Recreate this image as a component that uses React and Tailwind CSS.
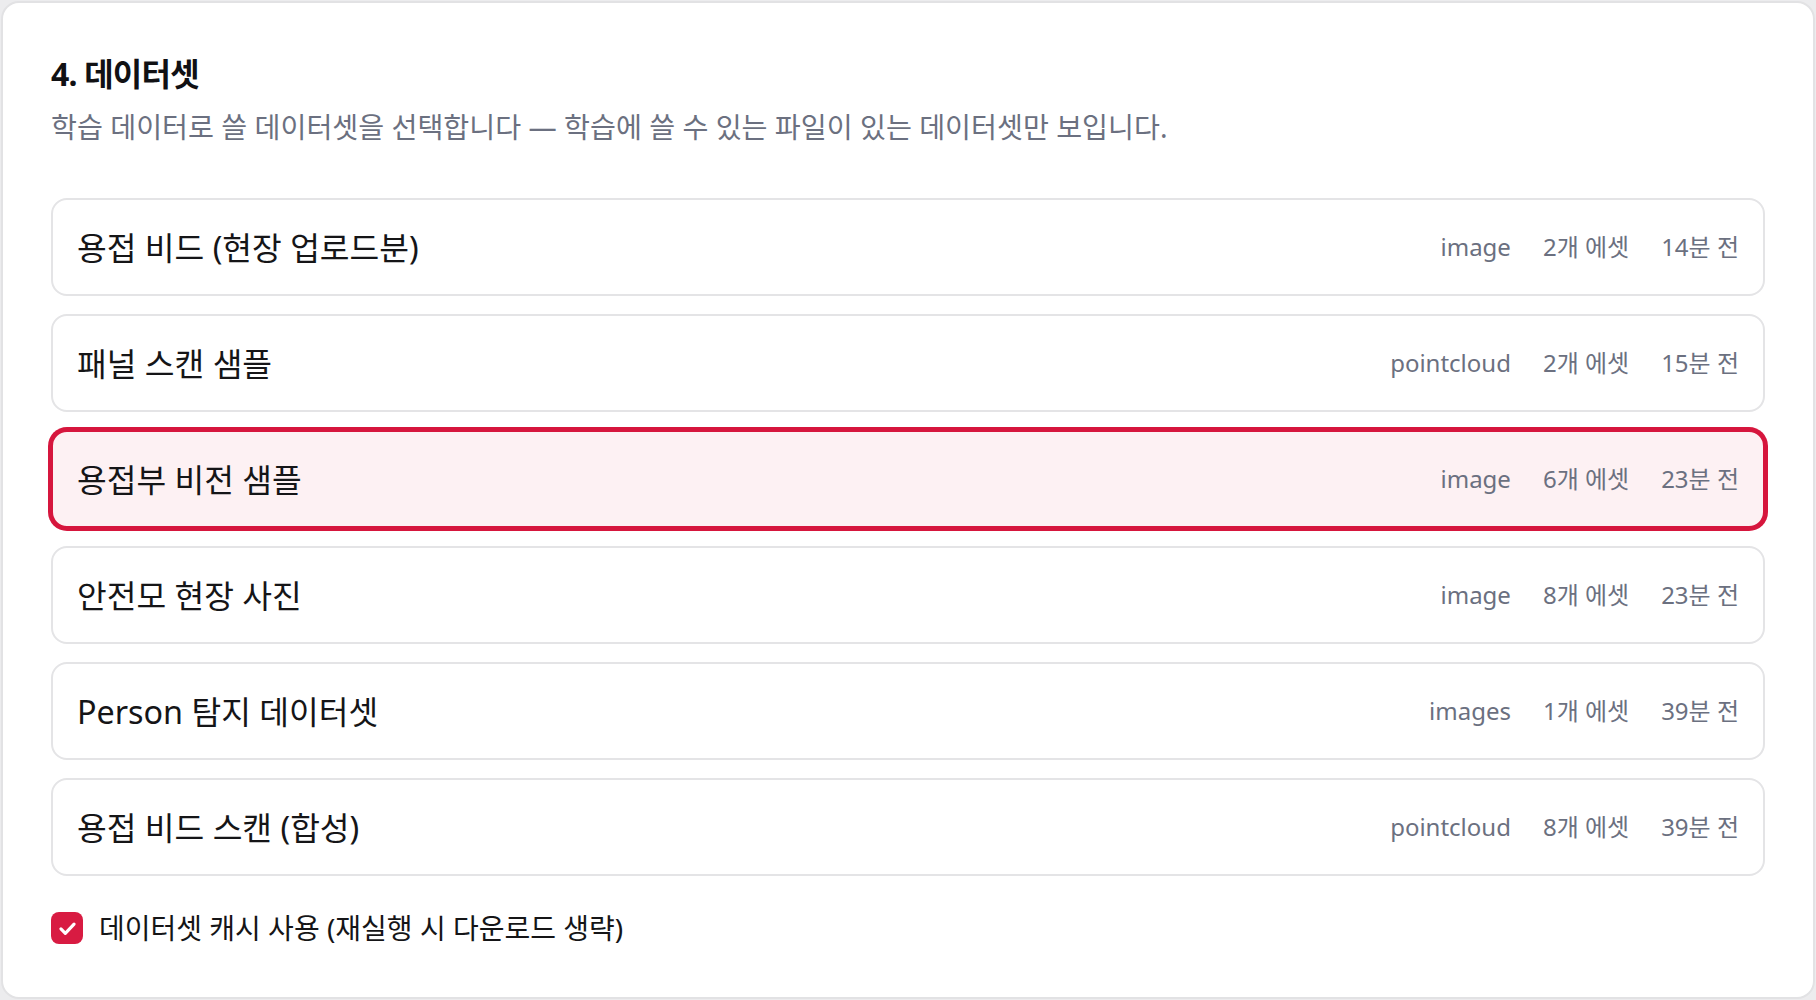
import { useState } from "react";

const datasets = [
  { id: 1, name: "용접 비드 (현장 업로드분)", type: "image", count: 2, ago: "14분 전" },
  { id: 2, name: "패널 스캔 샘플", type: "pointcloud", count: 2, ago: "15분 전" },
  { id: 3, name: "용접부 비전 샘플", type: "image", count: 6, ago: "23분 전" },
  { id: 4, name: "안전모 현장 사진", type: "image", count: 8, ago: "23분 전" },
  { id: 5, name: "Person 탐지 데이터셋", type: "images", count: 1, ago: "39분 전" },
  { id: 6, name: "용접 비드 스캔 (합성)", type: "pointcloud", count: 8, ago: "39분 전" },
];

function DatasetRow({ item, selected, onSelect }) {
  return (
    <button
      type="button"
      onClick={() => onSelect(item.id)}
      className={`flex h-[98px] w-full items-center justify-between rounded-[16px] border-2 px-[24px] text-left ${
        selected
          ? "border-[#d6163d] bg-[#fdf1f3] ring-[3px] ring-[#d6163d]"
          : "border-[#e4e4e6] bg-white"
      }`}
    >
      <span className="text-[32.3px] leading-none text-[#151517]">{item.name}</span>
      <span className="flex items-center gap-[32px] text-[24px] leading-none text-[#6b7080]">
        <span>{item.type}</span>
        <span>{item.count}개 에셋</span>
        <span>{item.ago}</span>
      </span>
    </button>
  );
}

export default function App() {
  const [selectedId, setSelectedId] = useState(3);
  const [useCache, setUseCache] = useState(true);

  return (
    <div className="h-screen bg-[#ececee] p-px font-['Noto_Sans','Noto_Sans_CJK_KR',sans-serif]">
      <div className="h-full rounded-[18px] border-2 border-[#e2e2e4] bg-white px-[48px] pt-[51px]">
        {/* Section header */}
        <h2 className="text-[32px] font-bold leading-[40px] tracking-tight text-[#111114]">4. 데이터셋</h2>
        <p className="mt-[14px] text-[28.2px] leading-[38px] text-[#6b7080]">
          학습 데이터로 쓸 데이터셋을 선택합니다 — 학습에 쓸 수 있는 파일이 있는 데이터셋만 보입니다.
        </p>

        {/* Dataset list */}
        <div className="mt-[52px] flex flex-col gap-[18px]">
          {datasets.map((d) => (
            <DatasetRow key={d.id} item={d} selected={d.id === selectedId} onSelect={setSelectedId} />
          ))}
        </div>

        {/* Cache option */}
        <label className="mt-[33px] flex cursor-pointer items-center gap-[16px]">
          <span
            onClick={() => setUseCache(!useCache)}
            className={`flex h-[32px] w-[32px] items-center justify-center rounded-[8px] ${
              useCache ? "bg-[#d81b42]" : "border-2 border-[#c4c4c8] bg-white"
            }`}
          >
            {useCache && (
              <svg width="21" height="21" viewBox="0 0 24 24" fill="none" stroke="white" strokeWidth="3.6" strokeLinecap="round" strokeLinejoin="round">
                <path d="M4.5 12.5l5 5L19.5 7" />
              </svg>
            )}
          </span>
          <span className="text-[28px] leading-[38px] text-[#151517]">데이터셋 캐시 사용 (재실행 시 다운로드 생략)</span>
        </label>
      </div>
    </div>
  );
}
